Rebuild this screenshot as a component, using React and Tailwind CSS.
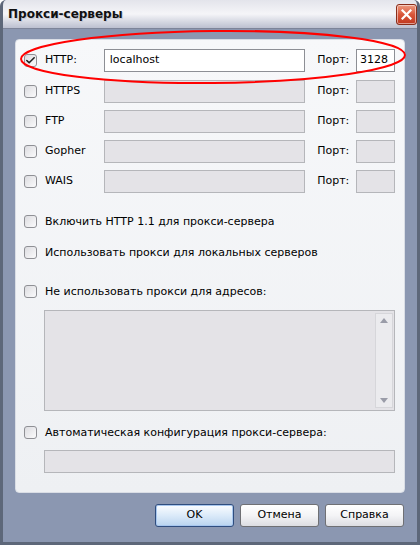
import { Check } from "lucide-react";

const font = { fontFamily: '"DejaVu Sans", Tahoma, sans-serif' };

export default function App() {
  return (
    <div
      className="relative flex h-[545px] w-[420px] flex-col overflow-hidden rounded-t-[6px] border-[3px] border-t-0 border-[#5d6779] bg-[#8b97b1] text-[11px] text-black"
      style={font}
    >
      <TitleBar />

      <div className="flex flex-col px-[12px] pt-[10px]">
        <div className="flex flex-col rounded-[4px] border border-[#d9dde5] bg-gradient-to-b from-[#f7f8fa] to-[#eef0f3] pl-[8px] pr-[9px] pb-[19px] pt-[9px]">
          <ProxyRow label="HTTP:" checked host="localhost" port="3128" />
          <ProxyRow label="HTTPS" className="mt-[8px]" />
          <ProxyRow label="FTP" className="mt-[7px]" />
          <ProxyRow label="Gopher" className="mt-[7px]" />
          <ProxyRow label="WAIS" className="mt-[7px]" />

          <CheckRow className="mt-[22px]" label="Включить HTTP 1.1 для прокси-сервера" />
          <CheckRow className="mt-[18px]" label="Использовать прокси для локальных серверов" />
          <CheckRow className="mt-[26px]" label="Не использовать прокси для адресов:" />

          <div className="ml-[20px] mt-[12px] flex h-[101px] border border-[#b5b6ba] bg-[#e4e3e7]">
            <div className="flex-1" />
            <div className="my-[2px] mr-[1px] flex w-[18px] flex-col items-center justify-between border border-[#d6d6da] bg-[#ebebee] py-[4px]">
              <span className="h-0 w-0 border-x-[4px] border-b-[5px] border-x-transparent border-b-[#9a9ca8]" />
              <span className="h-0 w-0 border-x-[4px] border-t-[5px] border-x-transparent border-t-[#9a9ca8]" />
            </div>
          </div>

          <CheckRow className="mt-[15px]" label="Автоматическая конфигурация прокси-сервера:" />

          <div className="ml-[20px] mt-[11px] h-[23px] border border-[#b5b6ba] bg-[#e4e3e7]" />
        </div>

        <div className="mt-[11px] flex justify-end gap-[6px] pr-[1px]">
          <Button primary>OK</Button>
          <Button>Отмена</Button>
          <Button>Справка</Button>
        </div>
      </div>

      <svg
        className="pointer-events-none absolute left-0 top-0"
        width="420"
        height="100"
      >
        <ellipse
          cx="210"
          cy="57"
          rx="192"
          ry="26"
          fill="none"
          stroke="#ff0000"
          strokeWidth="2"
          transform="rotate(-0.6 210 57)"
        />
      </svg>
    </div>
  );
}

function TitleBar() {
  return (
    <div className="-mx-[3px] flex h-[29px] shrink-0 items-center justify-between rounded-t-[6px] border-b border-[#7d8499] bg-gradient-to-b from-[#e3e4eb] via-[#f5f5f8] to-[#bcc0d0] pl-[8px] pr-[3px]">
      <span
        className="text-[12px] font-bold text-[#111]"
        style={{ textShadow: "1px 1px 0 #c8cad6" }}
      >
        Прокси-серверы
      </span>

      <div className="flex h-[21px] w-[21px] items-center justify-center rounded-[3px] border border-[#8a2d1a] bg-gradient-to-b from-[#ec9a80] via-[#d9563a] to-[#c0381f] shadow-[inset_0_0_0_1px_rgba(255,255,255,0.5)]">
        <svg width="11" height="11" viewBox="0 0 11 11">
          <path
            d="M1.5 1.5 L9.5 9.5 M9.5 1.5 L1.5 9.5"
            stroke="#fff"
            strokeWidth="2.2"
            strokeLinecap="square"
          />
        </svg>
      </div>
    </div>
  );
}

function Checkbox({ checked }) {
  return (
    <span className="flex h-[13px] w-[13px] shrink-0 items-center justify-center rounded-[3px] border border-[#8f9095] bg-gradient-to-br from-[#dcdce0] to-[#fbfbfc]">
      {checked && <Check size={11} strokeWidth={3.5} className="text-[#222]" />}
    </span>
  );
}

function CheckRow({ label, className = "" }) {
  return (
    <div className={`flex h-[13px] items-center gap-[8px] ${className}`}>
      <Checkbox />
      <span className="whitespace-nowrap leading-none">{label}</span>
    </div>
  );
}

function ProxyRow({ label, checked, host, port, className = "" }) {
  const box = host
    ? "border-[#8d8f95] bg-white"
    : "border-[#b5b6ba] bg-[#e4e3e7]";

  return (
    <div className={`flex h-[23px] items-center ${className}`}>
      <Checkbox checked={checked} />
      <span className="ml-[8px] w-[59px]">{label}</span>
      <div className={`flex h-[23px] w-[202px] items-center border px-[5px] ${box}`}>
        {host}
      </div>
      <span className="ml-[12px] w-[39px]">Порт:</span>
      <div className={`flex h-[23px] w-[39px] items-center border px-[3px] ${box}`}>
        {port}
      </div>
    </div>
  );
}

function Button({ primary, children }) {
  return (
    <button
      type="button"
      className={`flex h-[23px] w-[79px] items-center justify-center rounded-[3px] border font-normal ${
        primary
          ? "border-[#2f4d7e] bg-gradient-to-b from-[#fbfdff] via-[#dbeaf9] to-[#b9d3ee] shadow-[inset_0_0_0_1px_#a7c6ee]"
          : "border-[#6f7074] bg-gradient-to-b from-white via-[#f4f4f6] to-[#dcdde2]"
      }`}
    >
      {children}
    </button>
  );
}
